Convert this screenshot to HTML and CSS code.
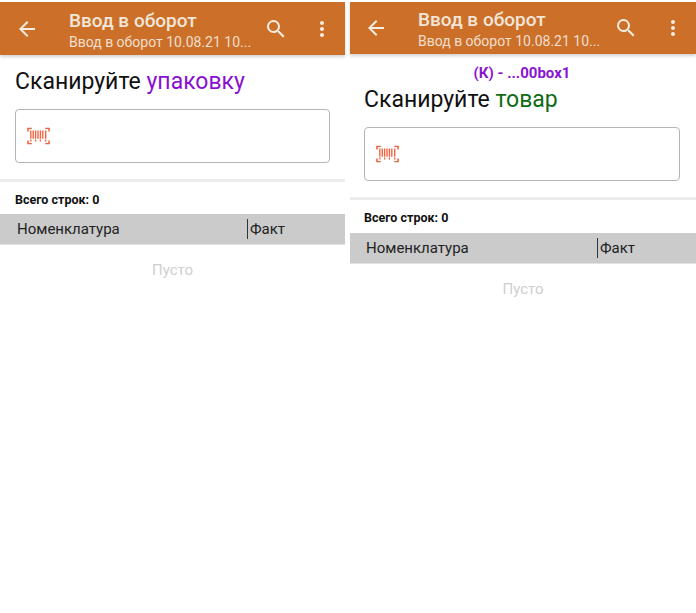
FILE: index.html
```html
<!DOCTYPE html>
<html lang="ru">
<head>
<meta charset="utf-8">
<title>Ввод в оборот</title>
<link rel="stylesheet" href="styles.css">
</head>
<body>
<main class="page">
  <section class="screen screen-left">
    <header class="appbar">
      <svg class="icon back" viewBox="0 0 24 24"><path d="M20 11H7.83l5.59-5.59L12 4l-8 8 8 8 1.41-1.41L7.83 13H20z"/></svg>
      <div class="titles">
        <div class="title">Ввод в оборот</div>
        <div class="subtitle">Ввод в оборот 10.08.21 10...</div>
      </div>
      <svg class="icon search" viewBox="0 0 24 24"><path d="M15.5 14h-.79l-.28-.27A6.47 6.47 0 0 0 16 9.5 6.5 6.5 0 1 0 9.5 16c1.61 0 3.09-.59 4.23-1.57l.27.28v.79l5 4.99L20.49 19l-4.99-5zm-6 0C7.01 14 5 11.99 5 9.5S7.01 5 9.5 5 14 7.01 14 9.5 11.99 14 9.5 14z"/></svg>
      <svg class="icon more" viewBox="0 0 24 24"><path d="M12 8c1.1 0 2-.9 2-2s-.9-2-2-2-2 .9-2 2 .9 2 2 2zm0 2c-1.1 0-2 .9-2 2s.9 2 2 2 2-.9 2-2-.9-2-2-2zm0 6c-1.1 0-2 .9-2 2s.9 2 2 2 2-.9 2-2-.9-2-2-2z"/></svg>
    </header>
    <h1 class="prompt">Сканируйте <span class="purple">упаковку</span></h1>
    <div class="field">
      <svg class="barcode" viewBox="0 0 24 20" preserveAspectRatio="none"><path class="frame" d="M1 5V1.500H5M19 1.500H23V5M1 15V18.500H5M19 18.500H23V15"/><path class="bars" d="M4 4V16M6.500 4V14M9 4V16M11.500 4V14M14 4V16M16.500 4V14M19.500 4V16"/></svg>
    </div>
    <div class="divider"></div>
    <div class="count">Всего строк: 0</div>
    <div class="thead"><div class="col-name">Номенклатура</div><div class="col-fact">Факт</div></div>
    <div class="empty">Пусто</div>
  </section>
  <section class="screen screen-right">
    <header class="appbar">
      <svg class="icon back" viewBox="0 0 24 24"><path d="M20 11H7.83l5.59-5.59L12 4l-8 8 8 8 1.41-1.41L7.83 13H20z"/></svg>
      <div class="titles">
        <div class="title">Ввод в оборот</div>
        <div class="subtitle">Ввод в оборот 10.08.21 10...</div>
      </div>
      <svg class="icon search" viewBox="0 0 24 24"><path d="M15.5 14h-.79l-.28-.27A6.47 6.47 0 0 0 16 9.5 6.5 6.5 0 1 0 9.5 16c1.61 0 3.09-.59 4.23-1.57l.27.28v.79l5 4.99L20.49 19l-4.99-5zm-6 0C7.01 14 5 11.99 5 9.5S7.01 5 9.5 5 14 7.01 14 9.5 11.99 14 9.5 14z"/></svg>
      <svg class="icon more" viewBox="0 0 24 24"><path d="M12 8c1.1 0 2-.9 2-2s-.9-2-2-2-2 .9-2 2 .9 2 2 2zm0 2c-1.1 0-2 .9-2 2s.9 2 2 2 2-.9 2-2-.9-2-2-2zm0 6c-1.1 0-2 .9-2 2s.9 2 2 2 2-.9 2-2-.9-2-2-2z"/></svg>
    </header>
    <div class="box-code">(К) - ...00box1</div>
    <h1 class="prompt">Сканируйте <span class="green">товар</span></h1>
    <div class="field">
      <svg class="barcode" viewBox="0 0 24 20" preserveAspectRatio="none"><path class="frame" d="M1 5V1.500H5M19 1.500H23V5M1 15V18.500H5M19 18.500H23V15"/><path class="bars" d="M4 4V16M6.500 4V14M9 4V16M11.500 4V14M14 4V16M16.500 4V14M19.500 4V16"/></svg>
    </div>
    <div class="divider"></div>
    <div class="count">Всего строк: 0</div>
    <div class="thead"><div class="col-name">Номенклатура</div><div class="col-fact">Факт</div></div>
    <div class="empty">Пусто</div>
  </section>
</main>
</body>
</html>
```
FILE: styles.css
```css
* { box-sizing: border-box; }
html, body { margin: 0; padding: 0; background: #fff; }
body { font-family: Roboto, "Liberation Sans", sans-serif; color: #111; width: 696px; height: 613px; overflow: hidden; }
.page { display: flex; gap: 5px; padding-top: 2px; }
.screen { display: flex; flex-direction: column; --inset: 15px; }
.screen-left { width: 345px; }
.screen-right { width: 346px; --inset: 14px; }
.appbar { display: flex; align-items: center; height: 53px; background: #cc7029; color: #f2e6da; box-shadow: 0 2px 3px rgba(0,0,0,.18); }
.screen-right .appbar { height: 52px; }
.icon { fill: #f6ece2; width: 24px; height: 24px; flex: none; }
.back { margin-left: 15px; }
.screen-right .back { margin-left: 14px; }
.titles { flex: 1; margin-left: 30px; min-width: 0; }
.title { font-size: 19px; font-weight: 500; line-height: 24px; margin-top: 3px; }
.screen-right .title { margin-top: 2px; }
.subtitle { font-size: 14px; line-height: 18px; color: #f0dfcf; white-space: nowrap; }
.search { margin-right: 22px; }
.screen-right .search { margin-right: 23px; }
.more { margin-right: 11px; }
.prompt { margin: 13px 0 0 var(--inset); font-size: 23px; line-height: 28px; font-weight: 400; color: #111; }
.box-code { margin-top: 11px; height: 17px; text-align: center; color: #8a14d0; font-size: 15px; line-height: 17px; font-weight: 700; padding-right: 2px; }
.screen-right .box-code + .prompt { margin-top: 4px; }
.purple { color: #8a10d0; }
.green { color: #0f6b14; }
.field { margin: 13px 15px 0 var(--inset); height: 54px; border: 1px solid #b5b5b5; border-radius: 4px; display: flex; align-items: center; padding-left: 11px; background: #fff; }
.screen-right .field { margin-right: 16px; }
.barcode { width: 23px; height: 18px; fill: none; }
.frame { stroke: #f2603c; stroke-width: 1.600; }
.bars { stroke: #f2603c; stroke-width: 1.400; stroke-dasharray: 9 1 2 1; }
.divider { height: 3px; margin-top: 16px; background: #ececec; }
.count { margin: 10px 0 0 var(--inset); font-size: 12.500px; line-height: 15px; font-weight: 700; color: #111; }
.thead { display: flex; align-items: center; height: 31px; margin-top: 7px; background: #cbcbcb; font-size: 15px; color: #222; border-bottom: 1px solid #e2e2e2; }
.screen-right .thead { margin-top: 8px; }
.col-name { width: 247px; padding-left: 17px; }
.screen-right .col-name { padding-left: 16px; }
.col-fact { border-left: 1px solid #333; line-height: 20px; padding-left: 2px; }
.empty { margin-top: 16px; text-align: center; font-size: 15px; line-height: 18px; color: #cfcfcf; }
```
